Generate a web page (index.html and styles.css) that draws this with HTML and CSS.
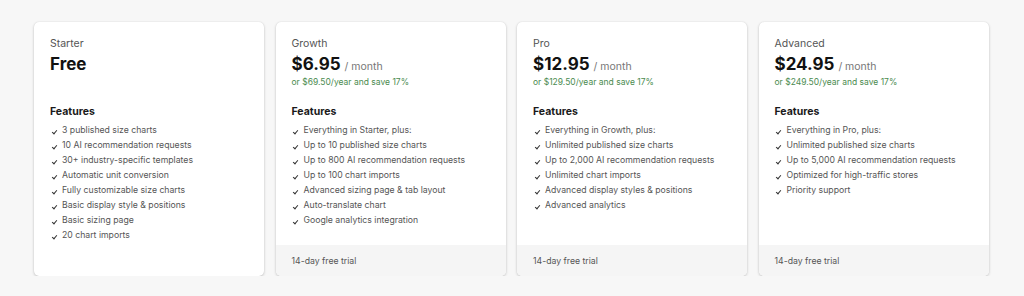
FILE: index.html
```html
<!DOCTYPE html>
<html>
<head>
<meta charset="utf-8">
<link rel="stylesheet" href="styles.css">
</head>
<body>
<div class="plans">
  <div class="card">
    <div class="body">
      <div class="name">Starter</div>
      <div class="price"><span class="amount">Free</span></div>
      <div class="yearly"></div>
      <div class="features-title">Features</div>
      <ul class="features">
        <li>3 published size charts</li>
        <li>10 AI recommendation requests</li>
        <li>30+ industry-specific templates</li>
        <li>Automatic unit conversion</li>
        <li>Fully customizable size charts</li>
        <li>Basic display style &amp; positions</li>
        <li>Basic sizing page</li>
        <li>20 chart imports</li>
      </ul>
    </div>
  </div>
  <div class="card">
    <div class="body">
      <div class="name">Growth</div>
      <div class="price"><span class="amount">$6.95</span><span class="per">/ month</span></div>
      <div class="yearly">or $69.50/year and save 17%</div>
      <div class="features-title">Features</div>
      <ul class="features">
        <li>Everything in Starter, plus:</li>
        <li>Up to 10 published size charts</li>
        <li>Up to 800 AI recommendation requests</li>
        <li>Up to 100 chart imports</li>
        <li>Advanced sizing page &amp; tab layout</li>
        <li>Auto-translate chart</li>
        <li>Google analytics integration</li>
      </ul>
    </div>
    <div class="foot">14-day free trial</div>
  </div>
  <div class="card">
    <div class="body">
      <div class="name">Pro</div>
      <div class="price"><span class="amount">$12.95</span><span class="per">/ month</span></div>
      <div class="yearly">or $129.50/year and save 17%</div>
      <div class="features-title">Features</div>
      <ul class="features">
        <li>Everything in Growth, plus:</li>
        <li>Unlimited published size charts</li>
        <li>Up to 2,000 AI recommendation requests</li>
        <li>Unlimited chart imports</li>
        <li>Advanced display styles &amp; positions</li>
        <li>Advanced analytics</li>
      </ul>
    </div>
    <div class="foot">14-day free trial</div>
  </div>
  <div class="card">
    <div class="body">
      <div class="name">Advanced</div>
      <div class="price"><span class="amount">$24.95</span><span class="per">/ month</span></div>
      <div class="yearly">or $249.50/year and save 17%</div>
      <div class="features-title">Features</div>
      <ul class="features">
        <li>Everything in Pro, plus:</li>
        <li>Unlimited published size charts</li>
        <li>Up to 5,000 AI recommendation requests</li>
        <li>Optimized for high-traffic stores</li>
        <li>Priority support</li>
      </ul>
    </div>
    <div class="foot">14-day free trial</div>
  </div>
</div>
</body>
</html>
```

FILE: styles.css
```css
html, body {
  margin: 0;
  padding: 0;
  background: #f7f7f7;
  font-family: Inter, "Liberation Sans", sans-serif;
  color: #1a1a1a;
}
.plans {
  display: flex;
  gap: 11.5px;
  padding: 22px 35px 0 34px;
  height: 254px;
}
.card {
  width: 230px;
  height: 254px;
  background: #fff;
  border-radius: 5px;
  box-shadow: 0 1px 3px rgba(0,0,0,0.2), 0 0 1px rgba(0,0,0,0.12);
  display: flex;
  flex-direction: column;
  overflow: hidden;
}
.body {
  flex: 1;
  padding: 15px 16px 0 16px;
}
.name {
  font-size: 10.5px;
  color: #555;
  line-height: 13px;
}
.price {
  margin-top: 3px;
  line-height: 22px;
  height: 22px;
  display: flex;
  align-items: baseline;
}
.amount {
  font-size: 17px;
  font-weight: 700;
  color: #111;
}
.per {
  font-size: 10.5px;
  color: #777;
  margin-left: 4px;
}
.yearly {
  font-size: 8.5px;
  color: #4b8b4f;
  line-height: 12px;
  height: 12px;
  margin-top: 1px;
}
.features-title {
  margin-top: 17px;
  font-size: 10.5px;
  font-weight: 700;
  color: #1a1a1a;
  line-height: 14px;
}
.features {
  list-style: none;
  margin: 4px 0 0 0;
  padding: 0;
}
.features li {
  font-size: 8.7px;
  color: #555;
  line-height: 15px;
  padding-left: 12px;
  position: relative;
}
.features li::before {
  content: "";
  position: absolute;
  left: 2.5px;
  top: 6px;
  width: 2px;
  height: 4px;
  border-right: 1.2px solid #333;
  border-bottom: 1.2px solid #333;
  transform: rotate(40deg);
}
.foot {
  height: 31px;
  background: #f5f5f5;
  padding: 0 16px;
  font-size: 8.7px;
  color: #555;
  line-height: 32px;
}
```
